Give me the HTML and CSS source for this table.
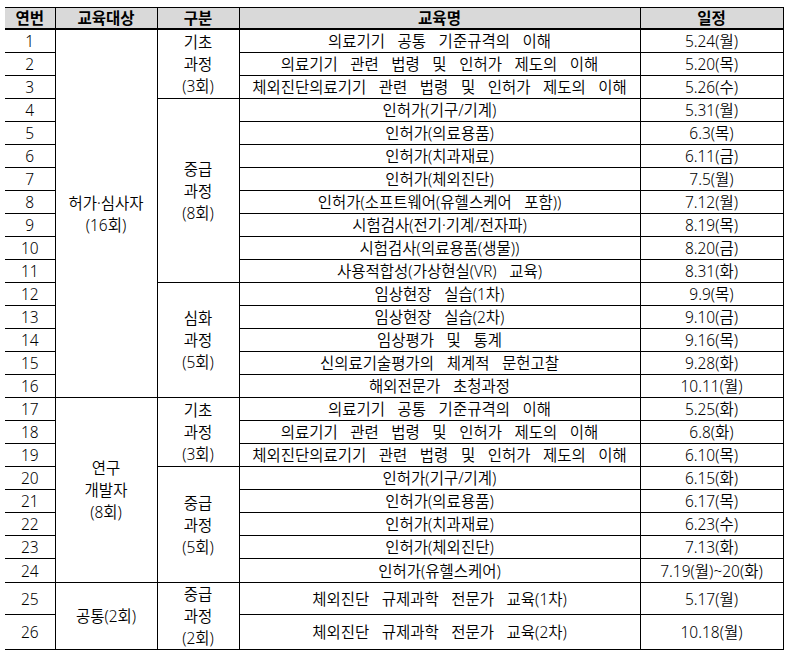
FILE: index.html
```html
<!DOCTYPE html>
<html lang="ko">
<head>
<meta charset="utf-8">
<title>교육 일정</title>
<link rel="stylesheet" href="styles.css">
</head>
<body>
<table class="sched">
  <colgroup>
    <col class="c-no"><col class="c-target"><col class="c-type"><col class="c-name"><col class="c-date">
  </colgroup>
  <thead>
    <tr class="head"><th>연번</th><th>교육대상</th><th>구분</th><th>교육명</th><th>일정</th></tr>
  </thead>
  <tbody>
    <tr><td>1</td><td rowspan="16" class="multi">허가·심사자<br>(16회)</td><td rowspan="3" class="multi">기초<br>과정<br>(3회)</td><td>의료기기 공통 기준규격의 이해</td><td>5.24(월)</td></tr>
    <tr><td>2</td><td>의료기기 관련 법령 및 인허가 제도의 이해</td><td>5.20(목)</td></tr>
    <tr><td>3</td><td>체외진단의료기기 관련 법령 및 인허가 제도의 이해</td><td>5.26(수)</td></tr>
    <tr><td>4</td><td rowspan="8" class="multi">중급<br>과정<br>(8회)</td><td>인허가(기구/기계)</td><td>5.31(월)</td></tr>
    <tr><td>5</td><td>인허가(의료용품)</td><td>6.3(목)</td></tr>
    <tr><td>6</td><td>인허가(치과재료)</td><td>6.11(금)</td></tr>
    <tr><td>7</td><td>인허가(체외진단)</td><td>7.5(월)</td></tr>
    <tr><td>8</td><td>인허가(소프트웨어(유헬스케어 포함))</td><td>7.12(월)</td></tr>
    <tr><td>9</td><td>시험검사(전기·기계/전자파)</td><td>8.19(목)</td></tr>
    <tr><td>10</td><td>시험검사(의료용품(생물))</td><td>8.20(금)</td></tr>
    <tr><td>11</td><td>사용적합성(가상현실(VR) 교육)</td><td>8.31(화)</td></tr>
    <tr><td>12</td><td rowspan="5" class="multi">심화<br>과정<br>(5회)</td><td>임상현장 실습(1차)</td><td>9.9(목)</td></tr>
    <tr><td>13</td><td>임상현장 실습(2차)</td><td>9.10(금)</td></tr>
    <tr><td>14</td><td>임상평가 및 통계</td><td>9.16(목)</td></tr>
    <tr><td>15</td><td>신의료기술평가의 체계적 문헌고찰</td><td>9.28(화)</td></tr>
    <tr><td>16</td><td>해외전문가 초청과정</td><td>10.11(월)</td></tr>
    <tr><td>17</td><td rowspan="8" class="multi">연구<br>개발자<br>(8회)</td><td rowspan="3" class="multi">기초<br>과정<br>(3회)</td><td>의료기기 공통 기준규격의 이해</td><td>5.25(화)</td></tr>
    <tr><td>18</td><td>의료기기 관련 법령 및 인허가 제도의 이해</td><td>6.8(화)</td></tr>
    <tr><td>19</td><td>체외진단의료기기 관련 법령 및 인허가 제도의 이해</td><td>6.10(목)</td></tr>
    <tr><td>20</td><td rowspan="5" class="multi">중급<br>과정<br>(5회)</td><td>인허가(기구/기계)</td><td>6.15(화)</td></tr>
    <tr><td>21</td><td>인허가(의료용품)</td><td>6.17(목)</td></tr>
    <tr><td>22</td><td>인허가(치과재료)</td><td>6.23(수)</td></tr>
    <tr><td>23</td><td>인허가(체외진단)</td><td>7.13(화)</td></tr>
    <tr class="r24"><td>24</td><td>인허가(유헬스케어)</td><td>7.19(월)~20(화)</td></tr>
    <tr class="r25"><td>25</td><td rowspan="2">공통(2회)</td><td rowspan="2" class="multi">중급<br>과정<br>(2회)</td><td>체외진단 규제과학 전문가 교육(1차)</td><td>5.17(월)</td></tr>
    <tr class="r26"><td>26</td><td>체외진단 규제과학 전문가 교육(2차)</td><td>10.18(월)</td></tr>
  </tbody>
</table>
</body>
</html>
```
FILE: styles.css
```css
html, body {
  margin: 0;
  padding: 0;
  background: #ffffff;
}
body {
  font-family: "Noto Sans", "Noto Sans CJK KR", sans-serif;
  font-size: 15.5px;
  font-weight: 350;
  color: #000;
}
.sched {
  border-collapse: collapse;
  table-layout: fixed;
  width: 778px;
  margin: 7px 0 0 5px;
}
.c-no { width: 50px; }
.c-target { width: 102px; }
.c-type { width: 82px; }
.c-name { width: 401px; }
.c-date { width: 143px; }

.sched th,
.sched td {
  padding: 0;
  text-align: center;
  vertical-align: middle;
  line-height: 22px;
  height: 22px;
  white-space: nowrap;
  word-spacing: 8.5px;
  border: 1px solid #000;
}
.sched th:first-child,
.sched td:first-child {
  border-left: none;
}
.head th {
  background: #d9d9d9;
  font-weight: 700;
  line-height: 20px;
  height: 20px;
  border-bottom: 2px solid #000;
}
.r24 td { height: 23px; }
.r25 td { height: 29px; }
.r26 td { height: 31px; }
```
